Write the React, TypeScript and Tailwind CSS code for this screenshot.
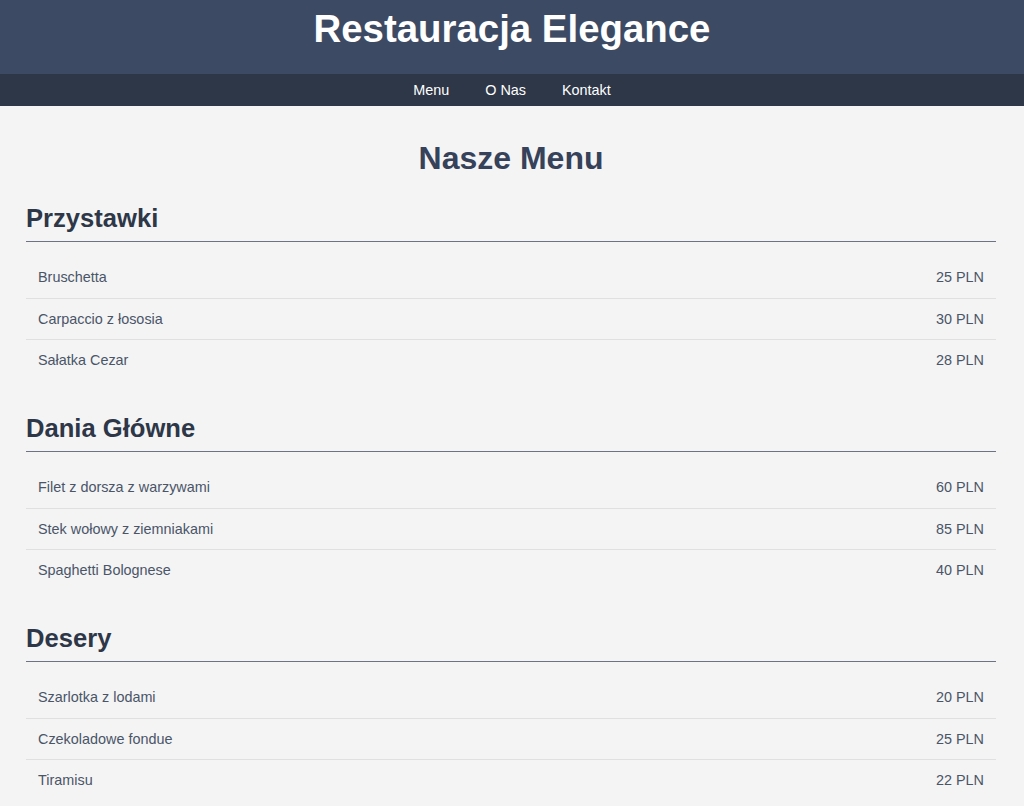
const menu = [
  {
    title: 'Przystawki',
    items: [
      { name: 'Bruschetta', price: '25 PLN' },
      { name: 'Carpaccio z łososia', price: '30 PLN' },
      { name: 'Sałatka Cezar', price: '28 PLN' },
    ],
  },
  {
    title: 'Dania Główne',
    items: [
      { name: 'Filet z dorsza z warzywami', price: '60 PLN' },
      { name: 'Stek wołowy z ziemniakami', price: '85 PLN' },
      { name: 'Spaghetti Bolognese', price: '40 PLN' },
    ],
  },
  {
    title: 'Desery',
    items: [
      { name: 'Szarlotka z lodami', price: '20 PLN' },
      { name: 'Czekoladowe fondue', price: '25 PLN' },
      { name: 'Tiramisu', price: '22 PLN' },
    ],
  },
]

export default function App() {
  return (
    <div className="min-h-screen bg-[#f4f4f4] font-['Liberation_Sans',Arial,sans-serif]">
      <header className="bg-[#3d4a63] h-[74px] pt-[7px]">
        <h1 className="text-center text-white font-bold text-[38.4px] leading-[44px]">
          Restauracja Elegance
        </h1>
      </header>
      <nav className="bg-[#2d3748] h-[32px] pt-[2px] flex items-center justify-center gap-[36px] text-white text-[14.4px]">
        <a href="#">Menu</a>
        <a href="#">O Nas</a>
        <a href="#">Kontakt</a>
      </nav>

      <main className="pl-[26px] pr-[28px] pt-[34px] pb-8">
        <h2 className="text-center font-bold text-[32px] leading-[37px] text-[#36415a] mb-[27px]">
          Nasze Menu
        </h2>
        {menu.map((section) => (
          <section key={section.title} className="mb-[33.5px]">
            <h3 className="font-bold text-[25.6px] leading-[29px] text-[#2d3748] pb-[8px] border-b border-[#6b7385]">
              {section.title}
            </h3>
            <ul className="mt-[15px]">
              {section.items.map((item) => (
                <li
                  key={item.name}
                  className="flex justify-between px-3 py-3 text-[14.4px] leading-[16.5px] text-[#4a5568] border-b border-[#e0e0e0] last:border-b-0"
                >
                  <span>{item.name}</span>
                  <span>{item.price}</span>
                </li>
              ))}
            </ul>
          </section>
        ))}
      </main>
    </div>
  )
}
